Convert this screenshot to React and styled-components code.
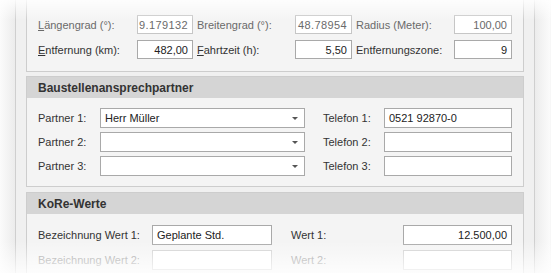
import React from 'react';
import styled, { createGlobalStyle } from 'styled-components';

const Global = createGlobalStyle`
  html, body { margin: 0; padding: 0; background: #ffffff; }
  body { font-family: "Liberation Sans", Arial, sans-serif; font-size: 11px; color: #333; }
`;

const Screen = styled.div`
  position: relative;
  width: 551px;
  height: 273px;
  overflow: hidden;
  display: flex;
  background: #f7f7f7;
`;

const Side = styled.div`
  width: ${p => p.w}px;
  flex: none;
  background: linear-gradient(to ${p => p.dir}, #fbfbfb, #ececec);
`;

const Panel = styled.div`
  flex: none;
  width: 520px;
  box-sizing: border-box;
  border-left: 1px solid #cfcfcf;
  border-right: 1px solid #cfcfcf;
  background: #f0f0f0;
  padding: 0 10px;
  display: flex;
  flex-direction: column;
  gap: 4px;
`;

const Group = styled.div`
  border: 1px solid #cdcdcd;
  border-top: ${p => (p.noTop ? 'none' : '1px solid #cdcdcd')};
  background: #f4f4f4;
  margin-top: ${p => p.mt || 0}px;
`;

const Header = styled.div`
  height: 21px;
  background: #d5d5d5;
  font-weight: bold;
  font-size: 12px;
  color: #333;
  display: flex;
  align-items: center;
  padding-left: 11px;
`;

const Grid = styled.div`
  display: grid;
  grid-template-columns: ${p => p.cols};
  row-gap: ${p => p.gap}px;
  padding: ${p => p.pad};
  align-items: center;
`;

const Label = styled.div`
  padding-left: ${p => p.indent || 0}px;
  color: ${p => (p.dim ? '#9a9a9a' : p.ro ? '#6a6a6a' : '#333')};
  white-space: nowrap;
  u { text-decoration: underline; text-underline-offset: 1px; }
`;

const Box = styled.div`
  box-sizing: border-box;
  height: ${p => p.h || 20}px;
  background: #fff;
  border: 1px solid ${p => (p.ro ? '#c6c6c6' : p.dim ? '#d0d0d0' : '#a9a9a9')};
  color: ${p => (p.ro ? '#6a6a6a' : '#222')};
  display: flex;
  align-items: center;
  justify-content: ${p => (p.right ? 'flex-end' : 'space-between')};
  padding: 0 4px;
  white-space: nowrap;
  letter-spacing: ${p => (p.mono ? '0.4px' : '0')};
`;

const Arrow = styled.span`
  width: 0;
  height: 0;
  border-left: 3px solid transparent;
  border-right: 3px solid transparent;
  border-top: 3px solid #555;
  margin-right: 2px;
`;

const Fade = styled.div`
  position: absolute;
  left: 0;
  right: 0;
  pointer-events: none;
  ${p => (p.top ? 'top: 0; height: 20px;' : 'bottom: 0; height: 32px;')}
  background: linear-gradient(
    to ${p => (p.top ? 'bottom' : 'top')},
    rgba(255, 255, 255, ${p => (p.top ? 0.85 : 0.8)}),
    rgba(255, 255, 255, 0)
  );
`;

const partners = [
  { name: 'Herr Müller', tel: '0521 92870-0' },
  { name: '', tel: '' },
  { name: '', tel: '' },
];

export default function App() {
  return (
    <>
      <Global />
      <Screen>
        <Side w={15} dir="right" />
        <Panel>
          <Group noTop>
            <Grid cols="99px 56px 102px 57px 102px 58px" gap={6} pad="15px 0 12px 11px">
              <Label ro><u>L</u>ängengrad (°):</Label>
              <Box ro right h={19} mono>9.179132</Box>
              <Label ro indent={4}>Breitengrad (°):</Label>
              <Box ro right h={19} mono>48.78954</Box>
              <Label ro indent={4}>Radius (Meter):</Label>
              <Box ro right h={19}>100,00</Box>

              <Label><u>E</u>ntfernung (km):</Label>
              <Box right h={19}>482,00</Box>
              <Label indent={4}><u>F</u>ahrtzeit (h):</Label>
              <Box right h={19}>5,50</Box>
              <Label indent={4}>Entfernungszone:</Label>
              <Box right h={19}>9</Box>
            </Grid>
          </Group>

          <Group>
            <Header>Baustellenansprechpartner</Header>
            <Grid cols="62px 205px 79px 128px" gap={4} pad="10px 0 10px 11px">
              {partners.map((p, i) => (
                <React.Fragment key={i}>
                  <Label>Partner {i + 1}:</Label>
                  <Box>
                    <span>{p.name}</span>
                    <Arrow />
                  </Box>
                  <Label indent={18}>Telefon {i + 1}:</Label>
                  <Box>{p.tel}</Box>
                </React.Fragment>
              ))}
            </Grid>
          </Group>

          <Group mt={1}>
            <Header>KoRe-Werte</Header>
            <Grid cols="114px 120px 131px 109px" gap={5} pad="11px 0 10px 11px">
              <Label>Bezeichnung Wert 1:</Label>
              <Box>Geplante Std.</Box>
              <Label indent={19}>Wert 1:</Label>
              <Box right>12.500,00</Box>

              <Label dim>Bezeichnung Wert 2:</Label>
              <Box dim />
              <Label dim indent={19}>Wert 2:</Label>
              <Box dim />
            </Grid>
          </Group>
        </Panel>
        <Side w={15} dir="left" />
        <Fade top />
        <Fade />
      </Screen>
    </>
  );
}
